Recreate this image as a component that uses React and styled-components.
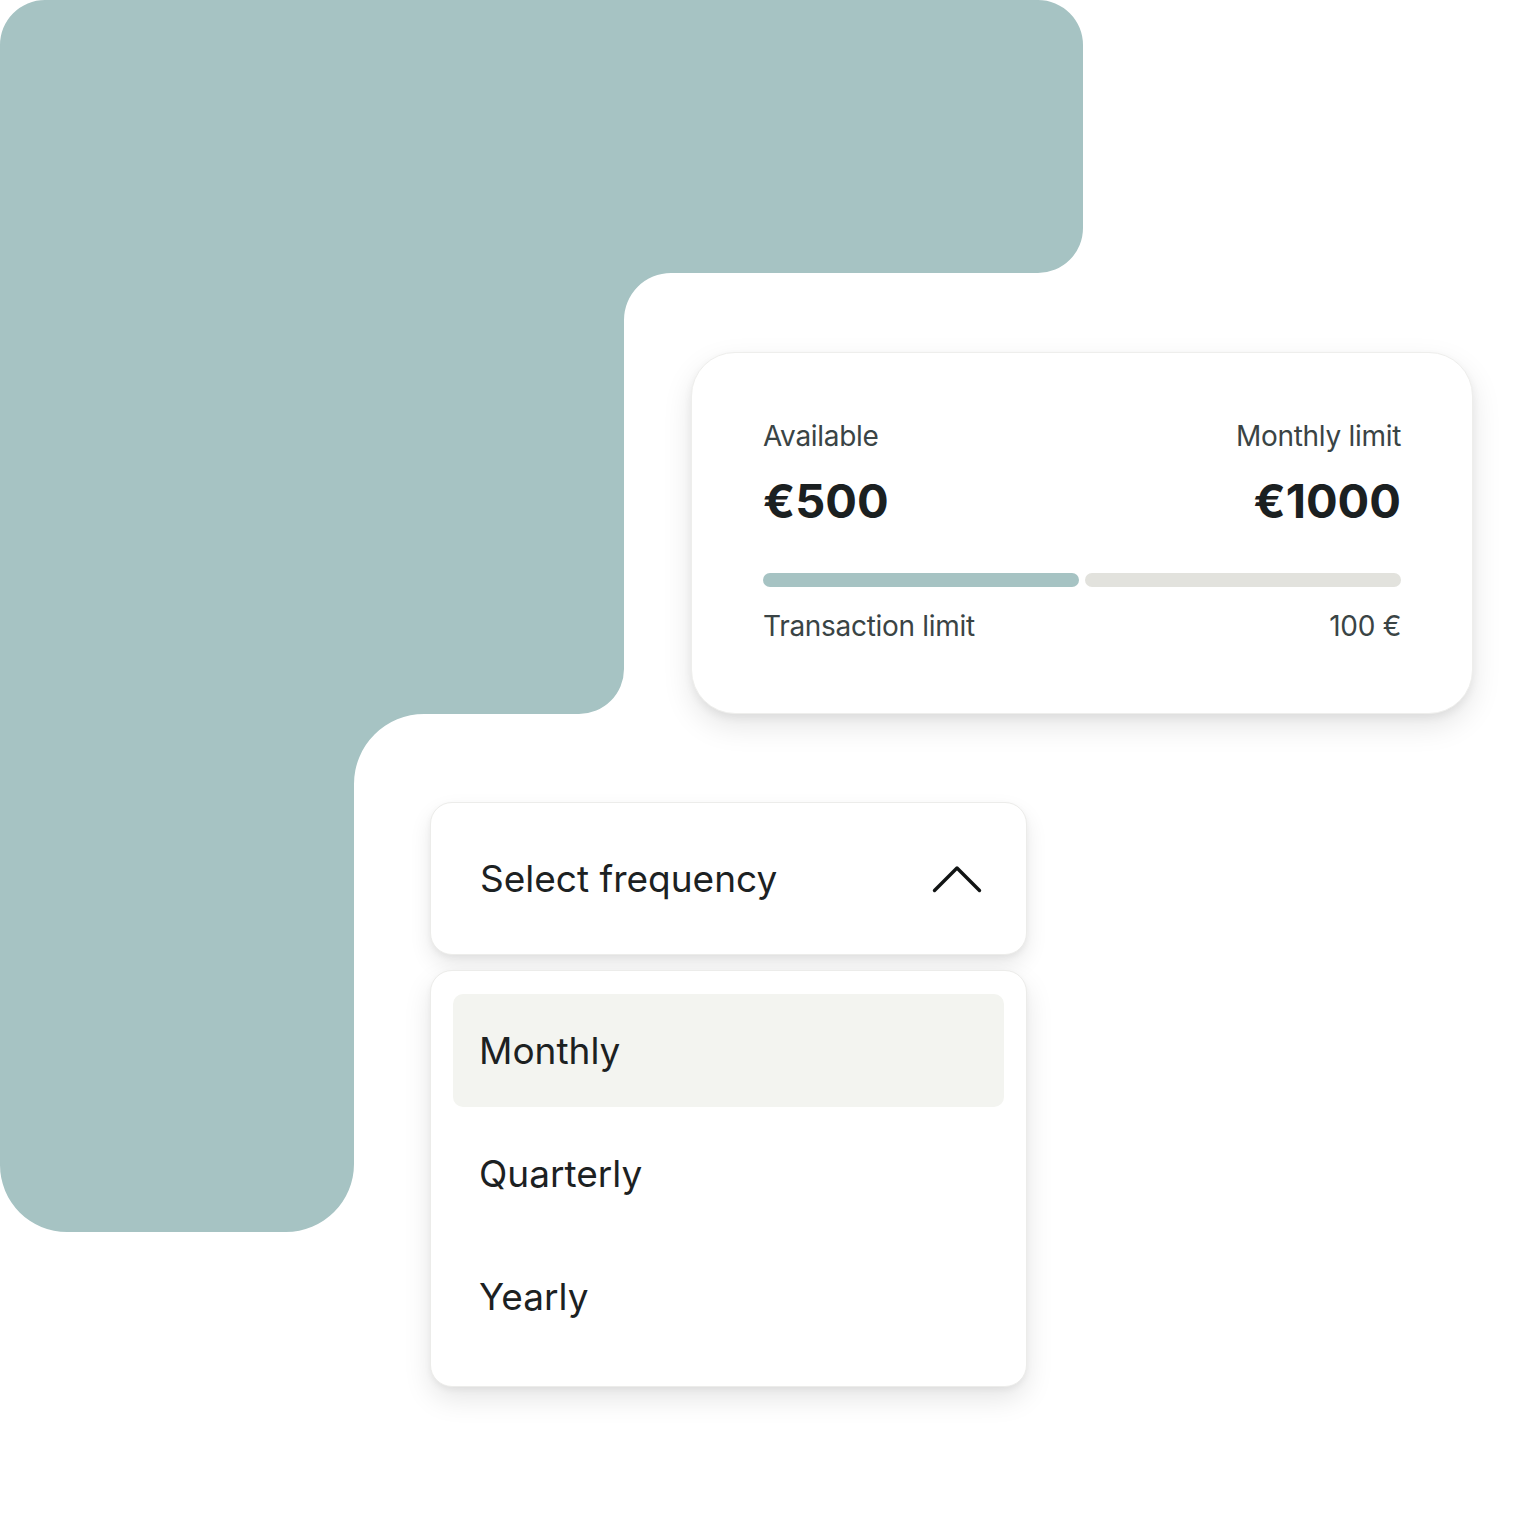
import React from 'react';
import styled, { createGlobalStyle } from 'styled-components';

const GlobalStyle = createGlobalStyle`
  html, body {
    margin: 0;
    padding: 0;
    background: #ffffff;
  }

  body {
    font-family: Inter, "Noto Sans", "Liberation Sans", sans-serif;
    color: #1c2122;
  }

  * {
    box-sizing: border-box;
  }
`;

const Page = styled.div`
  position: relative;
  width: 1536px;
  height: 1536px;
  overflow: hidden;
  display: flex;
  flex-direction: column;
  padding-top: 352px;
`;

const Backdrop = styled.svg`
  position: absolute;
  top: 0;
  left: 0;
  z-index: 0;
`;

const LimitCard = styled.section`
  position: relative;
  z-index: 1;
  margin-left: 691px;
  width: 782px;
  height: 362px;
  padding: 66px 71px 0 71px;
  background: #ffffff;
  border: 1px solid #eeeeec;
  border-radius: 44px;
  box-shadow: 0 12px 30px rgba(0, 0, 0, 0.1), 0 4px 8px rgba(0, 0, 0, 0.06);
  display: flex;
  flex-direction: column;
`;

const Row = styled.div`
  display: flex;
  justify-content: space-between;
  align-items: flex-start;
`;

const Stat = styled.div`
  display: flex;
  flex-direction: column;
  gap: 20px;
  align-items: ${({ $align }) => ($align === 'right' ? 'flex-end' : 'flex-start')};
`;

const Label = styled.span`
  font-size: 28px;
  line-height: 34px;
  font-weight: 400;
  color: #3a4445;
  letter-spacing: -0.3px;
`;

const Amount = styled.span`
  font-size: 47px;
  line-height: 55px;
  font-weight: 700;
  color: #1b2021;
  letter-spacing: 0;
`;

const Progress = styled.div`
  display: flex;
  gap: 6px;
  height: 14px;
  margin: 45px 0 22px;
`;

const Fill = styled.div`
  height: 100%;
  background: #a6c3c3;
  border-radius: 7px;
`;

const Track = styled.div`
  flex: 1;
  height: 100%;
  background: #e2e2dd;
  border-radius: 7px;
`;

const SelectField = styled.button`
  position: relative;
  z-index: 1;
  margin: 88px 0 0 430px;
  width: 597px;
  height: 153px;
  padding: 0 44px 0 49px;
  background: #ffffff;
  border: 1px solid #ececea;
  border-radius: 22px;
  box-shadow: 0 10px 22px rgba(0, 0, 0, 0.09), 0 3px 6px rgba(0, 0, 0, 0.05);
  display: flex;
  align-items: center;
  justify-content: space-between;
  font-family: inherit;
  font-size: 37px;
  font-weight: 400;
  color: #1c2122;
  letter-spacing: 0;
  cursor: pointer;
`;

const OptionList = styled.ul`
  position: relative;
  z-index: 1;
  list-style: none;
  margin: 15px 0 0 430px;
  width: 597px;
  padding: 23px 22px 33px;
  background: #ffffff;
  border: 1px solid #ececea;
  border-radius: 22px;
  box-shadow: 0 12px 28px rgba(0, 0, 0, 0.1), 0 3px 6px rgba(0, 0, 0, 0.05);
  display: flex;
  flex-direction: column;
  gap: 10px;
`;

const Option = styled.li`
  height: 113px;
  padding-left: 26px;
  display: flex;
  align-items: center;
  border-radius: 10px;
  background: ${({ $active }) => ($active ? '#f3f4f0' : 'transparent')};
  font-size: 37px;
  font-weight: 400;
  color: #1c2122;
  letter-spacing: 0;
`;

const ChevronUp = () => (
  <svg width="50" height="28" viewBox="0 0 50 28" fill="none">
    <path
      d="M2.5 25.5 L25 3 L47.5 25.5"
      stroke="#111414"
      strokeWidth="3.4"
      strokeLinecap="round"
      strokeLinejoin="round"
    />
  </svg>
);

const SHAPE =
  'M0 45 A45 45 0 0 1 45 0 L1038 0 A45 45 0 0 1 1083 45 L1083 228 A45 45 0 0 1 1038 273 ' +
  'L671 273 A47 47 0 0 0 624 320 L624 669 A45 45 0 0 1 579 714 L424 714 ' +
  'A70 70 0 0 0 354 784 L354 1164 A68 68 0 0 1 286 1232 L67 1232 A67 67 0 0 1 0 1165 Z';

const limits = {
  available: 500,
  monthly: 1000,
  transaction: 100,
};

const frequencies = ['Monthly', 'Quarterly', 'Yearly'];

const App = () => {
  const share = (limits.available / limits.monthly) * 100;

  return (
    <>
      <GlobalStyle />
      <Page>
        <Backdrop width="1536" height="1536" viewBox="0 0 1536 1536">
          <path d={SHAPE} fill="#a6c3c3" />
        </Backdrop>

        <LimitCard>
          <Row>
            <Stat>
              <Label>Available</Label>
              <Amount>€{limits.available}</Amount>
            </Stat>
            <Stat $align="right">
              <Label>Monthly limit</Label>
              <Amount>€{limits.monthly}</Amount>
            </Stat>
          </Row>
          <Progress>
            <Fill style={{ width: `calc(${share}% - 3px)` }} />
            <Track />
          </Progress>
          <Row>
            <Label>Transaction limit</Label>
            <Label>{limits.transaction} €</Label>
          </Row>
        </LimitCard>

        <SelectField type="button">
          <span>Select frequency</span>
          <ChevronUp />
        </SelectField>

        <OptionList>
          {frequencies.map((item, i) => (
            <Option key={item} $active={i === 0}>
              {item}
            </Option>
          ))}
        </OptionList>
      </Page>
    </>
  );
};

export default App;
